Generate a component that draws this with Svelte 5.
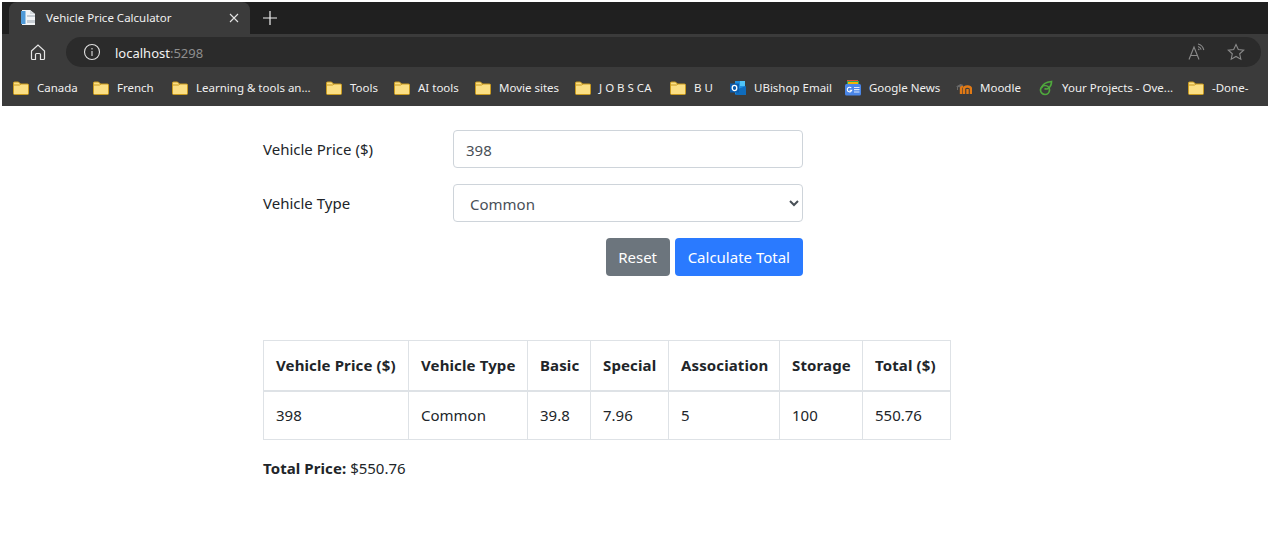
<script lang="ts">
  let price = $state('398');
  let type = $state('Common');

  const bookmarks = [
    { label: 'Canada', icon: 'folder', w: 80 },
    { label: 'French', icon: 'folder', w: 79 },
    { label: 'Learning & tools an...', icon: 'folder', w: 154 },
    { label: 'Tools', icon: 'folder', w: 68 },
    { label: 'AI tools', icon: 'folder', w: 81 },
    { label: 'Movie sites', icon: 'folder', w: 100 },
    { label: 'J O B S CA', icon: 'folder', w: 95 },
    { label: 'B U', icon: 'folder', w: 60 },
    { label: 'UBishop Email', icon: 'outlook', w: 115 },
    { label: 'Google News', icon: 'gnews', w: 111 },
    { label: 'Moodle', icon: 'moodle', w: 82 },
    { label: 'Your Projects - Ove...', icon: 'leaf', w: 150 },
    { label: '-Done-', icon: 'folder', w: 70 }
  ];

  const headers = ['Vehicle Price ($)', 'Vehicle Type', 'Basic', 'Special', 'Association', 'Storage', 'Total ($)'];
  const widths = [145, 119, 63, 78, 111, 83, 88];
  const row = ['398', 'Common', '39.8', '7.96', '5', '100', '550.76'];
</script>

<div class="chrome">
  <div class="tabstrip">
    <div class="tab">
      <svg class="favicon" width="17" height="17" viewBox="0 0 17 17">
        <path d="M2 1h8l5 4v11H2z" fill="#f2f4f6" />
        <path d="M1 2h4.500v13H1z" fill="#4f9ad8" />
        <path d="M7 6h8v2H7zM7 11h8v3H7z" fill="#c5ccd3" />
        <path d="M10 1l5 4h-5z" fill="#d5dade" />
      </svg>
      <span class="tab-title">Vehicle Price Calculator</span>
      <svg class="tab-close" width="10" height="10" viewBox="0 0 10 10">
        <path d="M1 1l8 8M9 1l-8 8" stroke="#e4e4e4" stroke-width="1.100" />
      </svg>
    </div>
    <svg class="newtab" width="16" height="16" viewBox="0 0 16 16">
      <path d="M8 1v14M1 8h14" stroke="#f0f0f0" stroke-width="1.200" />
    </svg>
  </div>

  <div class="toolbar">
    <svg class="home" width="18" height="18" viewBox="0 0 18 18" fill="none" stroke="#e6e6e6" stroke-width="1.200">
      <path d="M2.500 8L9 2l6.500 6v7.500a1 1 0 0 1-1 1H11.500V11.500a1 1 0 0 0-1-1h-3a1 1 0 0 0-1 1v5H3.500a1 1 0 0 1-1-1z" />
    </svg>
    <div class="omnibox">
      <svg width="18" height="18" viewBox="0 0 18 18" fill="none" stroke="#e0e0e0" stroke-width="1.100">
        <circle cx="9" cy="9" r="7.500" />
        <path d="M9 8v5M9 5v1.400" />
      </svg>
      <span class="url">localhost<span class="port">:5298</span></span>
      <svg class="read" width="18" height="18" viewBox="0 0 18 18" fill="none" stroke="#8a8a8a" stroke-width="1.100">
        <path d="M1 16.500L6 4l5 12.500M2.800 12.500h6.400" />
        <path d="M10 1c2.800.6 5 2.600 5.800 6M10 3.500c1.500.4 2.700 1.500 3.200 3.200M10 6c.6.200 1 .6 1.200 1.200" />
      </svg>
      <svg class="star" width="18" height="18" viewBox="0 0 18 18" fill="none" stroke="#8a8a8a" stroke-width="1.100">
        <path d="M9 1.500l2.300 5 5.400.6-4 3.700 1.100 5.400L9 13.500l-4.800 2.700 1.100-5.400-4-3.700 5.400-.6z" />
      </svg>
    </div>
  </div>

  <div class="bookmarks">
    {#each bookmarks as b}
      <div class="bookmark" style:width="{b.w}px">
        {#if b.icon === 'folder'}
          <svg width="16" height="16" viewBox="0 0 16 16">
            <path d="M.5 3a1 1 0 0 1 1-1h4l2 2h7a1 1 0 0 1 1 1v8.500a1 1 0 0 1-1 1h-13a1 1 0 0 1-1-1z" fill="#fbdf84" stroke="#c99a1e" />
            <path d="M1 5h5.500l1.500-1" fill="none" stroke="#c99a1e" />
          </svg>
        {:else if b.icon === 'outlook'}
          <svg width="16" height="16" viewBox="0 0 16 16">
            <path d="M5 1h10v13H5z" fill="#1f8fe0" />
            <path d="M10 1h5v5h-5z" fill="#4fc3f7" />
            <path d="M8 9l8-3v9H5z" fill="#0f6cbd" />
            <rect x="0" y="3.500" width="9" height="9" fill="#0b5cad" />
            <ellipse cx="4.500" cy="8" rx="2.300" ry="2.600" fill="none" stroke="#fff" stroke-width="1.300" />
          </svg>
        {:else if b.icon === 'gnews'}
          <svg width="16" height="16" viewBox="0 0 16 16">
            <path d="M2 0h11v4H2z" fill="#e0483b" />
            <path d="M2 1h12v4H2z" fill="#2ea55a" />
            <path d="M3 2h10v3H3z" fill="#f4b400" />
            <rect x="0" y="4" width="16" height="11.500" rx="1.500" fill="#4a86e8" />
            <path d="M6.300 8a2.300 2.300 0 1 0 .5 2.200H4.600" fill="none" stroke="#fff" stroke-width="1.100" />
            <path d="M9 7.500h5.500M9 9.700h5.500M9 12h5.500" stroke="#dbe7fb" stroke-width="1.200" />
          </svg>
        {:else if b.icon === 'moodle'}
          <svg width="16" height="16" viewBox="0 0 16 16">
            <path d="M0 6.500l4.500-2.500 3 1-3.500 2.500z" fill="#6a6a6a" />
            <path d="M1.500 7v3" stroke="#6a6a6a" fill="none" />
            <path d="M5 14V8.800c0-1.500 1-2.200 2-1.800M8 14V9c0-3 7-3.500 7 0v5" fill="none" stroke="#e27a15" stroke-width="2.400" />
            <path d="M11.500 9v5" fill="none" stroke="#e27a15" stroke-width="2.400" />
          </svg>
        {:else}
          <svg width="16" height="16" viewBox="0 0 16 16" fill="none" stroke="#4fa83d" stroke-width="1.700">
            <circle cx="7" cy="10" r="4.500" />
            <path d="M3.500 8C4.500 4 8.500 2 13.500 1.500c0 3-1 5.500-3.500 7-1.500.8-3 .3-3.500 0" />
          </svg>
        {/if}
        <span>{b.label}</span>
      </div>
    {/each}
  </div>
</div>

<main>
  <form class="calc">
    <label for="price">Vehicle Price ($)</label>
    <input id="price" type="text" bind:value={price} />
    <label for="type">Vehicle Type</label>
    <select id="type" bind:value={type}>
      <option>Common</option>
      <option>Luxury</option>
    </select>
    <div class="actions">
      <button type="button" class="btn grey">Reset</button>
      <button type="button" class="btn blue">Calculate Total</button>
    </div>
  </form>

  <table>
    <colgroup>
      {#each widths as w}
        <col width={w} />
      {/each}
    </colgroup>
    <thead>
      <tr>
        {#each headers as h}
          <th>{h}</th>
        {/each}
      </tr>
    </thead>
    <tbody>
      <tr>
        {#each row as c}
          <td>{c}</td>
        {/each}
      </tr>
    </tbody>
  </table>

  <p class="total"><strong>Total Price:</strong> $550.76</p>
</main>

<style>
  :global(body) { margin: 0; background: #fff; font-family: "Noto Sans", "Open Sans", sans-serif; color: #212529; }

  .chrome { margin: 0 2px; padding-top: 2px; background: #3b3b3b linear-gradient(#fff 2px, transparent 2px); }
  .tabstrip { display: flex; align-items: center; height: 32px; background: #202020; padding-left: 7px; }
  .tab { display: flex; align-items: center; width: 241px; height: 32px; box-sizing: border-box; padding: 0 11px; background: #3b3b3b; border-radius: 8px 8px 0 0; }
  .favicon { flex: none; margin-right: 9px; margin-top: -2px; }
  .tab-title { flex: 1; margin-top: -2px; color: #f0f0f0; font-size: 11.500px; white-space: nowrap; }
  .tab-close { flex: none; }
  .newtab { margin-left: 12px; }

  .toolbar { display: flex; align-items: center; height: 36px; padding-left: 27px; padding-right: 7px; }
  .home { flex: none; margin-right: 19px; }
  .omnibox { flex: 1; display: flex; align-items: center; height: 30px; border-radius: 15px; background: #2b2b2b; padding: 0 16px 0 17px; }
  .url { flex: 1; margin: 2px 0 0 14px; color: #f2f2f2; font-size: 13px; }
  .port { color: #8e8e8e; }
  .read { margin-right: 21px; }

  .bookmarks { display: flex; align-items: center; height: 36px; padding-left: 11px; overflow: hidden; }
  .bookmark { display: flex; flex: none; align-items: center; gap: 8px; color: #f0f0f0; font-size: 11.500px; white-space: nowrap; }
  .bookmark svg { flex: none; margin-top: -1px; }
  .bookmark span { margin-top: -2px; }

  main { padding: 24px 0 0 263px; }
  .calc { display: grid; grid-template-columns: 190px 350px; row-gap: 16px; width: 540px; }
  label { align-self: center; font-size: 15px; }
  input, select { box-sizing: border-box; width: 100%; height: 38px; border: 1px solid #ced4da; border-radius: 4px; background: #fff; color: #495057; font: inherit; font-size: 15px; }
  input { padding: 2px 12px 0; }
  select { padding: 2px 12px 0; }
  .actions { grid-column: 1 / -1; display: flex; justify-content: flex-end; gap: 5px; }
  .btn { height: 38px; padding: 0 12px; border: 1px solid transparent; border-radius: 4px; color: #fff; font: inherit; font-size: 15px; cursor: pointer; }
  .grey { width: 64px; padding: 0; background: #6c757d; }
  .blue { background: #2a7aff; }

  table { margin-top: 64px; width: 688px; table-layout: fixed; border-collapse: collapse; font-size: 15px; }
  th, td { box-sizing: border-box; padding: 0 12px; border: 1px solid #dee2e6; text-align: left; white-space: nowrap; }
  th { height: 50px; border-bottom-width: 2px; font-weight: 700; letter-spacing: .12px; }
  td { height: 49px; }
  .total { margin: 18px 0 0; font-size: 15px; line-height: 20px; }
  .total strong { font-weight: 700; letter-spacing: .08px; }
</style>
